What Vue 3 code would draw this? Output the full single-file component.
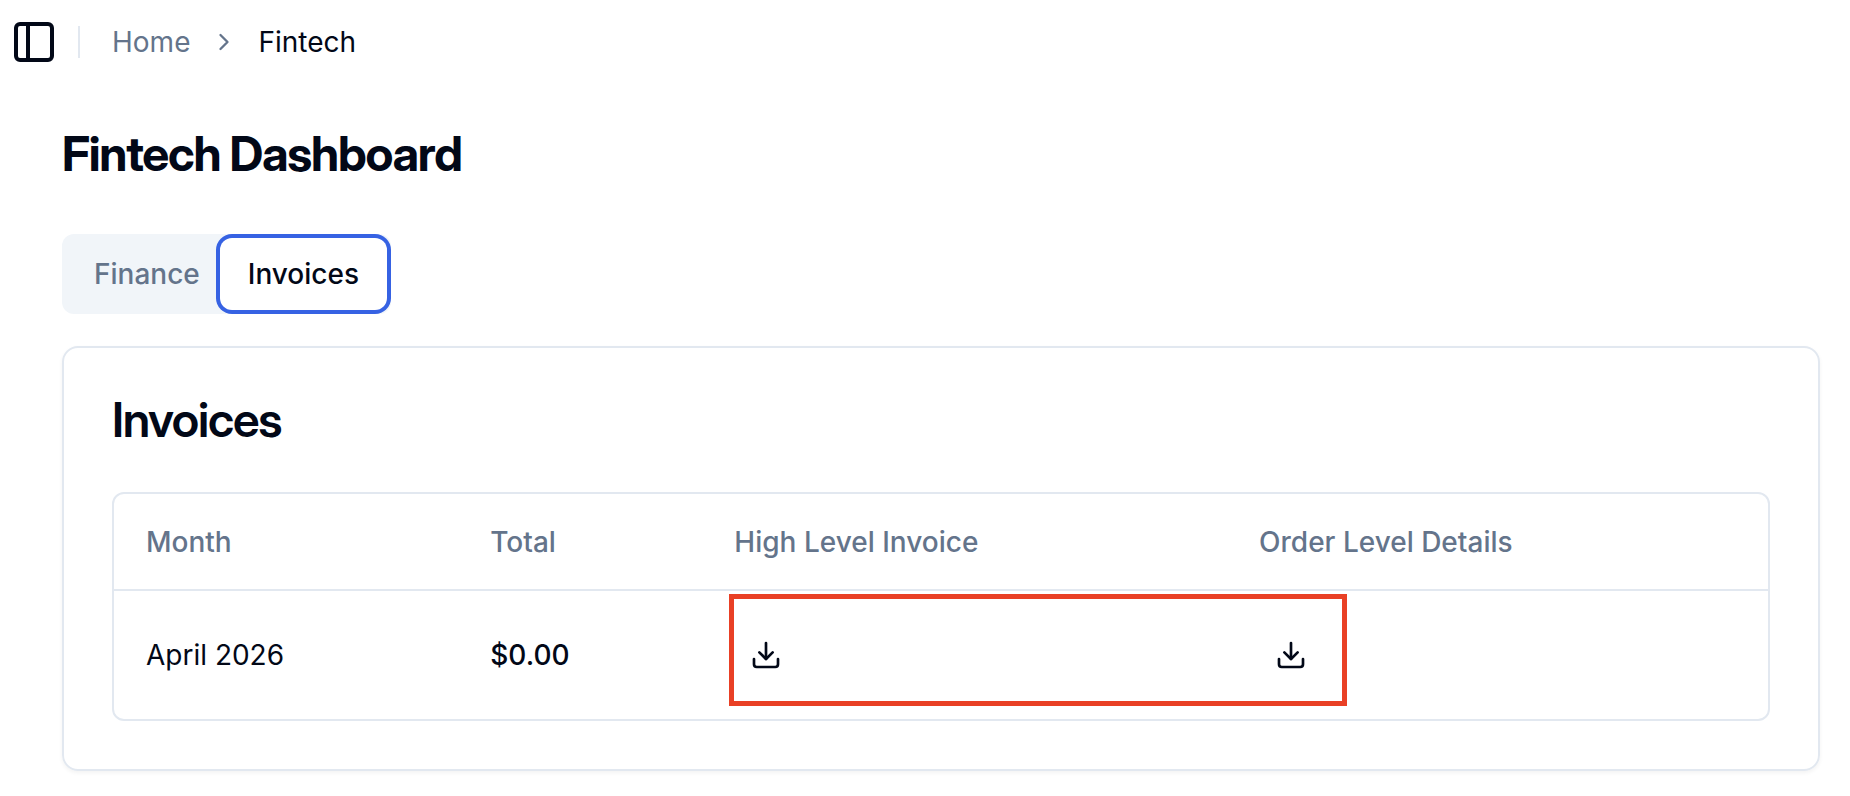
<template>
  <div class="page">
    <header class="topbar">
      <button type="button" class="sidebar-trigger" aria-label="Toggle Sidebar">
        <svg viewBox="0 0 24 24" class="icon icon-lg">
          <rect width="18" height="18" x="3" y="3" rx="2" />
          <path d="M9 3v18" />
        </svg>
      </button>
      <span class="separator"></span>
      <nav class="breadcrumb" aria-label="Breadcrumb">
        <a href="#">Home</a>
        <svg viewBox="0 0 24 24" class="icon icon-sm">
          <path d="m9 18 6-6-6-6" />
        </svg>
        <span class="current" aria-current="page">Fintech</span>
      </nav>
    </header>

    <main class="content">
      <h1 class="title">Fintech Dashboard</h1>

      <div class="tabs" role="tablist">
        <button
          v-for="tab in tabs"
          :key="tab"
          type="button"
          role="tab"
          class="tab"
          :class="{ active: tab === activeTab }"
          :aria-selected="tab === activeTab"
          @click="activeTab = tab"
        >
          {{ tab }}
        </button>
      </div>

      <section class="card">
        <h2 class="card-title">Invoices</h2>
        <div class="table-wrapper">
          <table>
            <thead>
              <tr>
                <th v-for="column in columns" :key="column" scope="col">{{ column }}</th>
              </tr>
            </thead>
            <tbody>
              <tr v-for="invoice in invoices" :key="invoice.month">
                <td>{{ invoice.month }}</td>
                <td class="total">{{ formatTotal(invoice.total) }}</td>
                <td class="downloads">
                  <button type="button" class="download" aria-label="Download high level invoice">
                    <svg viewBox="0 0 24 24" class="icon icon-md">
                      <path d="M21 15v4a2 2 0 0 1-2 2H5a2 2 0 0 1-2-2v-4" />
                      <path d="m7 10 5 5 5-5" />
                      <path d="M12 15V3" />
                    </svg>
                  </button>
                  <span class="highlight"></span>
                </td>
                <td>
                  <button type="button" class="download" aria-label="Download order level details">
                    <svg viewBox="0 0 24 24" class="icon icon-md">
                      <path d="M21 15v4a2 2 0 0 1-2 2H5a2 2 0 0 1-2-2v-4" />
                      <path d="m7 10 5 5 5-5" />
                      <path d="M12 15V3" />
                    </svg>
                  </button>
                </td>
              </tr>
            </tbody>
          </table>
        </div>
      </section>
    </main>
  </div>
</template>

<script setup>
import { ref } from 'vue'

const tabs = ['Finance', 'Invoices']
const activeTab = ref('Invoices')

const columns = ['Month', 'Total', 'High Level Invoice', 'Order Level Details']

const invoices = ref([{ month: 'April 2026', total: 0 }])

const formatTotal = (value) => `$${value.toFixed(2)}`
</script>

<style>
body {
  margin: 0;
  background: #ffffff;
}
</style>

<style scoped>
.page {
  font-family: Inter, 'Liberation Sans', sans-serif;
  font-size: 28px;
  line-height: 40px;
  color: #020817;
}

.page *,
.page *::before {
  box-sizing: border-box;
}

button {
  padding: 0;
  border: 0;
  background: transparent;
  font: inherit;
  color: inherit;
  cursor: pointer;
}

.icon {
  display: block;
  flex-shrink: 0;
  fill: none;
  stroke: currentColor;
  stroke-width: 2;
  stroke-linecap: round;
  stroke-linejoin: round;
}

.icon-sm {
  width: 28px;
  height: 28px;
}

.icon-md {
  width: 32px;
  height: 32px;
}

.icon-lg {
  width: 48px;
  height: 48px;
}

/* Top bar */
.topbar {
  display: flex;
  align-items: center;
  gap: 16px;
  padding: 14px 6px;
}

.sidebar-trigger {
  display: flex;
  align-items: center;
  justify-content: center;
  width: 56px;
  height: 56px;
}

.separator {
  width: 2px;
  height: 32px;
  margin-right: 16px;
  background: #e2e8f0;
}

.breadcrumb {
  display: flex;
  align-items: center;
  gap: 20px;
  color: #64748b;
}

.breadcrumb a {
  color: inherit;
  text-decoration: none;
}

.breadcrumb .current {
  color: #020817;
}

/* Content */
.content {
  padding: 38px 30px 24px 62px;
}

.title,
.card-title {
  margin: 0 0 48px;
  font-family: 'Inter Display', Inter, 'Liberation Sans', sans-serif;
  font-size: 48px;
  letter-spacing: -0.025em;
}

.title {
  line-height: 64px;
  font-weight: 700;
}

.card-title {
  line-height: 48px;
  font-weight: 600;
}

.tabs {
  display: inline-flex;
  padding: 8px;
  border-radius: 12px;
  background: #f1f5f9;
  color: #64748b;
}

.tab {
  padding: 12px 24px;
  border-radius: 8px;
  font-weight: 500;
}

.tab.active {
  background: #ffffff;
  color: #020817;
  box-shadow:
    0 0 0 4px #ffffff,
    0 0 0 8px #3662e3;
}

.card {
  margin-top: 32px;
  padding: 48px;
  border: 2px solid #e2e8f0;
  border-radius: 16px;
  box-shadow: 0 2px 4px rgba(0, 0, 0, 0.05);
}

/* Invoice table */
.table-wrapper {
  border: 2px solid #e2e8f0;
  border-radius: 12px;
}

table {
  width: 100%;
  border-collapse: separate;
  border-spacing: 0;
}

th {
  height: 97px;
  padding: 0 32px;
  border-bottom: 2px solid #e2e8f0;
  text-align: left;
  font-weight: 500;
  color: #64748b;
}

td {
  padding: 32px;
}

.total {
  font-weight: 500;
}

.download {
  display: flex;
  align-items: center;
  justify-content: center;
  width: 64px;
  height: 64px;
}

.downloads {
  position: relative;
}

/* Frame drawn over both download cells */
.highlight {
  position: absolute;
  top: 3px;
  right: -120px;
  bottom: 13px;
  left: 27px;
  border: 5px solid #e94025;
  pointer-events: none;
}
</style>
